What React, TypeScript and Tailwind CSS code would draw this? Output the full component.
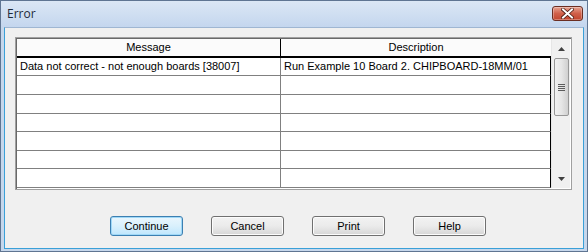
import React from 'react';

const rows: [string, string][] = [
  ['Data not correct - not enough boards [38007]', 'Run Example 10 Board 2. CHIPBOARD-18MM/01'],
  ['', ''],
  ['', ''],
  ['', ''],
  ['', ''],
  ['', ''],
  ['', ''],
];

const CloseButton = () => (
  <div className="mt-[5px] mr-[4px] w-[31px] h-[15px] rounded-[3px] border border-[#6b2e22] bg-gradient-to-b from-[#e6a392] via-[#d0604a] to-[#c1452e] flex items-center justify-center shadow-[inset_0_0_0_1px_rgba(255,255,255,0.3)]">
    <svg width="13" height="11" viewBox="0 0 13 11">
      <path d="M2 1.5 L11 9.5 M11 1.5 L2 9.5" stroke="#4a1a12" strokeWidth="3.6" strokeLinecap="square" />
      <path d="M2 1.5 L11 9.5 M11 1.5 L2 9.5" stroke="#ffffff" strokeWidth="2" strokeLinecap="square" />
    </svg>
  </div>
);

const Button = ({ label, primary }: { label: string; primary?: boolean }) => (
  <div
    className={
      'w-[73px] h-[20px] rounded-[3px] border flex items-center justify-center text-[11px] text-black ' +
      (primary
        ? 'border-[#3c7fb1] bg-gradient-to-b from-[#eaf6fd] via-[#d9f0fc] to-[#bee6fd] shadow-[inset_0_0_0_1px_#9fd8f7]'
        : 'border-[#707070] bg-gradient-to-b from-[#f2f2f2] via-[#ebebeb] to-[#d6d6d6] shadow-[inset_0_0_0_1px_#fcfcfc]')
    }
  >
    {label}
  </div>
);

const ScrollBar = () => (
  <div className="w-[19px] h-full flex flex-col items-center bg-[#f0f0f0] border-l border-[#e6e6e6]">
    <div className="h-[19px] w-full flex items-center justify-center">
      <svg width="7" height="4" viewBox="0 0 7 4">
        <path d="M0 4 L3.5 0 L7 4 Z" fill="#404040" />
      </svg>
    </div>
    <div className="w-[15px] h-[58px] rounded-[2px] border border-[#979797] bg-gradient-to-r from-[#f1f1f1] via-[#e6e6e6] to-[#d0d0d0] flex flex-col items-center justify-center gap-[1px]">
      <div className="w-[7px] h-[1px] bg-[#5c5c5c]" />
      <div className="w-[7px] h-[1px] bg-[#5c5c5c]" />
      <div className="w-[7px] h-[1px] bg-[#5c5c5c]" />
      <div className="w-[7px] h-[1px] bg-[#5c5c5c]" />
    </div>
    <div className="flex-1" />
    <div className="h-[19px] w-full flex items-center justify-center">
      <svg width="7" height="4" viewBox="0 0 7 4">
        <path d="M0 0 L7 0 L3.5 4 Z" fill="#404040" />
      </svg>
    </div>
  </div>
);

export default function App() {
  return (
    <div
      className="w-[588px] h-[252px] flex flex-col border border-[#5f7592] bg-[#c6d7ec] overflow-hidden"
      style={{ fontFamily: '"Liberation Sans", Arial, sans-serif' }}
    >
      {/* Title bar */}
      <div className="h-[26px] flex items-start justify-between bg-gradient-to-b from-[#dbe7f5] to-[#c4d6ee]">
        <span
          className="ml-[6px] mt-[4px] text-[12px] text-[#1e2a3a]"
          style={{ fontFamily: '"Open Sans", "Noto Sans", sans-serif' }}
        >
          Error
        </span>
        <CloseButton />
      </div>

      {/* Client area */}
      <div className="flex-1 mx-[3px] mb-[2px] border border-[#3aa0d8] border-t-[#9fb6d2] bg-[#f0f0f0] flex flex-col pl-[10px] pt-[9px]">
        {/* Grid */}
        <div className="w-[557px] h-[153px] border border-[#a0a0a0] shadow-[inset_1px_1px_0_#696969] bg-white flex p-[1px]">
          <div className="flex-1 flex flex-col text-[11px] text-black">
            <div className="h-[19px] flex border-b-2 border-black bg-[#fbfbfb]">
              <div className="w-[264px] border-r border-black flex items-center justify-center">Message</div>
              <div className="flex-1 flex items-center justify-center">Description</div>
            </div>
            {rows.map((r, i) => (
              <div key={i} className="h-[19px] flex border-b border-[#808080] border-r border-r-black">
                <div className="w-[264px] border-r border-[#808080] flex items-center pl-[3px] whitespace-nowrap">{r[0]}</div>
                <div className="flex-1 flex items-center pl-[3px] whitespace-nowrap">{r[1]}</div>
              </div>
            ))}
          </div>
          <ScrollBar />
        </div>

        {/* Buttons */}
        <div className="mt-[26px] ml-[95px] flex gap-[28px]">
          <Button label="Continue" primary />
          <Button label="Cancel" />
          <Button label="Print" />
          <Button label="Help" />
        </div>
      </div>
    </div>
  );
}
